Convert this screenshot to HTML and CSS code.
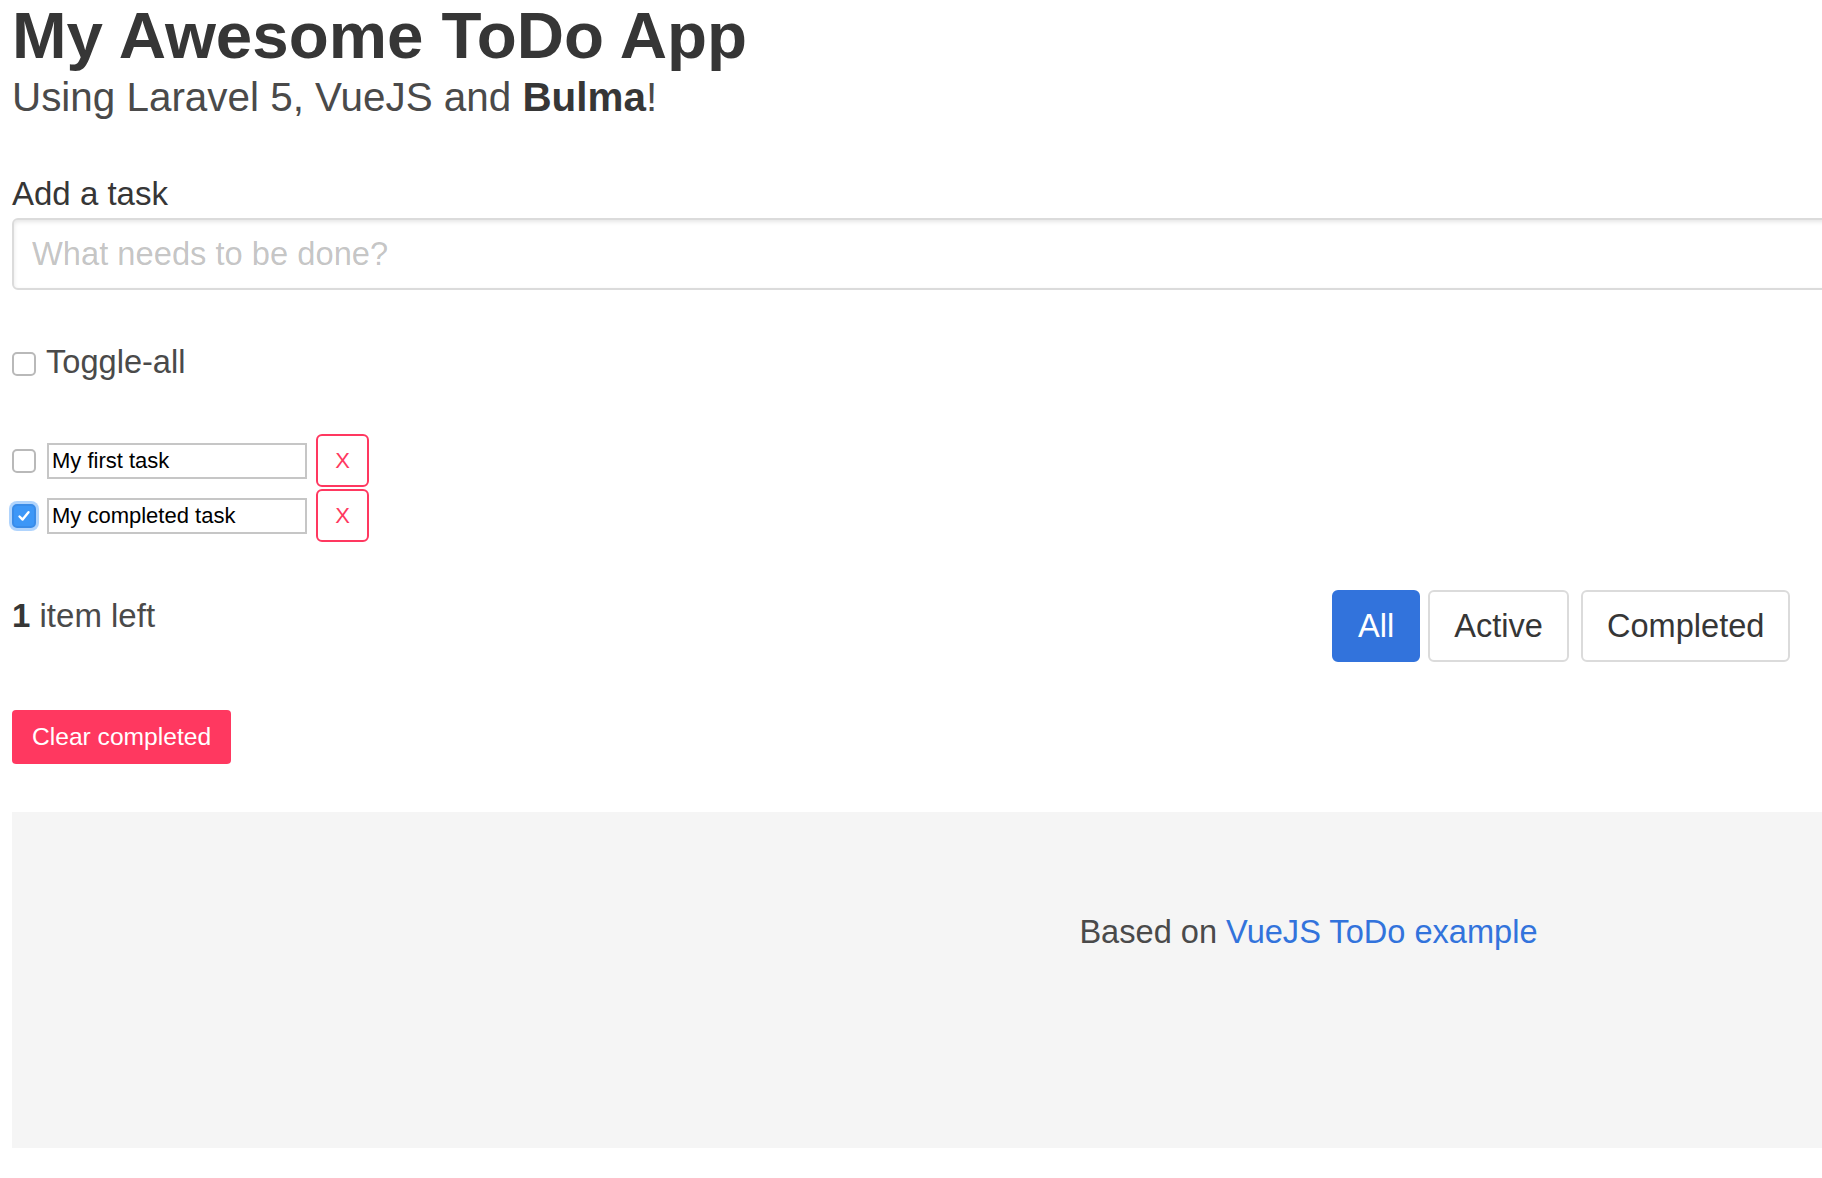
FILE: index.html
```html
<!DOCTYPE html>
<html>
<head>
<meta charset="utf-8">
<title>My Awesome ToDo App</title>
<link rel="stylesheet" href="styles.css">
</head>
<body>
<div class="page">
  <h1 class="title">My Awesome ToDo App</h1>
  <h2 class="subtitle">Using Laravel 5, VueJS and <strong>Bulma</strong>!</h2>

  <div class="field">
    <label class="label" for="new-todo">Add a task</label>
    <input class="input" id="new-todo" type="text" placeholder="What needs to be done?">
  </div>

  <div class="toggle-all"><span class="checkbox"></span><span>Toggle-all</span></div>

  <ul class="todo-list">
    <li class="todo">
      <span class="checkbox"></span>
      <input class="todo-edit" type="text" value="My first task">
      <button class="remove">X</button>
    </li>
    <li class="todo">
      <span class="checkbox checked"><svg width="16" height="16" viewBox="0 0 16 16"><path d="M3.5 8.5 L6.6 11.6 L12.5 4.2" fill="none" stroke="#fff" stroke-width="2.4" stroke-linecap="round" stroke-linejoin="round"/></svg></span>
      <input class="todo-edit" type="text" value="My completed task">
      <button class="remove">X</button>
    </li>
  </ul>

  <div class="level">
    <div class="count"><strong>1</strong> item left</div>
    <div class="filters">
      <a class="btn is-active" href="#">All</a>
      <a class="btn" href="#">Active</a>
      <a class="btn" href="#">Completed</a>
    </div>
  </div>

  <button class="clear">Clear completed</button>

  <footer class="footer">Based on <a href="#">VueJS ToDo example</a></footer>
</div>
</body>
</html>
```

FILE: styles.css
```css
* { box-sizing: border-box; }

html {
  overflow: hidden;
  background: #fff;
}

body {
  margin: 0;
  font-family: "Liberation Sans", Arial, Helvetica, sans-serif;
  font-size: 32.6px;
  line-height: 1.5;
  color: #4a4a4a;
}

.page {
  width: 2593px;
  margin-left: 12px;
}

.title {
  margin: 0;
  font-size: 65.5px;
  line-height: 72px;
  font-weight: 700;
  color: #363636;
}

.subtitle {
  margin: 0 0 48px;
  font-size: 40.4px;
  line-height: 50px;
  font-weight: 400;
  color: #4a4a4a;
}

.subtitle strong { color: #363636; }

.field { margin-bottom: 48px; }

.label {
  display: block;
  font-size: 33px;
  line-height: 48px;
  color: #363636;
}

.input {
  display: block;
  width: 100%;
  height: 72px;
  margin: 0;
  padding: 0 18px;
  border: 2px solid #dbdbdb;
  border-radius: 6px;
  box-shadow: inset 0 2px 4px rgba(10, 10, 10, 0.1);
  font-family: inherit;
  font-size: 32.7px;
  color: #363636;
  background: #fff;
}

.input::placeholder { color: rgba(54, 54, 54, 0.3); }

.toggle-all {
  display: flex;
  align-items: center;
  height: 48px;
  margin-bottom: 48px;
  color: #4a4a4a;
}

.toggle-all .checkbox { margin-right: 10px; margin-top: 4px; }

.checkbox {
  flex: none;
  width: 24px;
  height: 24px;
  border: 2px solid #b9b9b9;
  border-radius: 5px;
  background: #fff;
  display: flex;
  align-items: center;
  justify-content: center;
}

.checkbox.checked {
  background: #3d97f7;
  border-color: #3a8ce8;
  box-shadow: 0 0 0 3px rgba(80, 160, 250, 0.45);
}

.todo-list {
  list-style: none;
  margin: 0 0 48px;
  padding: 0;
  display: flex;
  flex-direction: column;
  gap: 2px;
}

.todo {
  display: flex;
  align-items: center;
  height: 53px;
}

.todo .checkbox { margin-right: 11px; }

.todo-edit {
  width: 260px;
  height: 36px;
  margin: 0 9px 0 0;
  padding: 0 3px;
  border: 2px solid #c6c6c6;
  font-family: "Liberation Sans", Arial, sans-serif;
  font-size: 22px;
  color: #000;
  background: #fff;
}

.remove {
  width: 53px;
  height: 53px;
  padding: 0;
  border: 2px solid #ff3860;
  border-radius: 6px;
  background: #fff;
  color: #ff3860;
  font-family: "Liberation Sans", Arial, sans-serif;
  font-size: 22px;
}

.level {
  display: flex;
  align-items: flex-start;
  margin-bottom: 48px;
}

.count {
  width: 1320px;
  padding-top: 2px;
  line-height: 48px;
  font-size: 33px;
  color: #4a4a4a;
}

.count strong { color: #363636; }

.filters {
  display: flex;
  gap: 8px;
}

.btn {
  display: flex;
  align-items: center;
  height: 72px;
  padding: 0 24px;
  border: 2px solid #dbdbdb;
  border-radius: 6px;
  background: #fff;
  color: #363636;
  font-size: 32.6px;
  text-decoration: none;
}

.btn + .btn + .btn { margin-left: 4px; }

.btn.is-active {
  background: #3273dc;
  border-color: #3273dc;
  color: #fff;
}

.clear {
  display: block;
  height: 54px;
  margin: 0 0 48px;
  padding: 0 20px;
  border: none;
  border-radius: 4px;
  background: #ff3860;
  color: #fff;
  font-family: "Liberation Sans", Arial, sans-serif;
  font-size: 24.6px;
}

.footer {
  padding: 96px 48px 192px;
  background: #f5f5f5;
  text-align: center;
  line-height: 48px;
  color: #4a4a4a;
}

.footer a {
  color: #3273dc;
  text-decoration: none;
}
```
